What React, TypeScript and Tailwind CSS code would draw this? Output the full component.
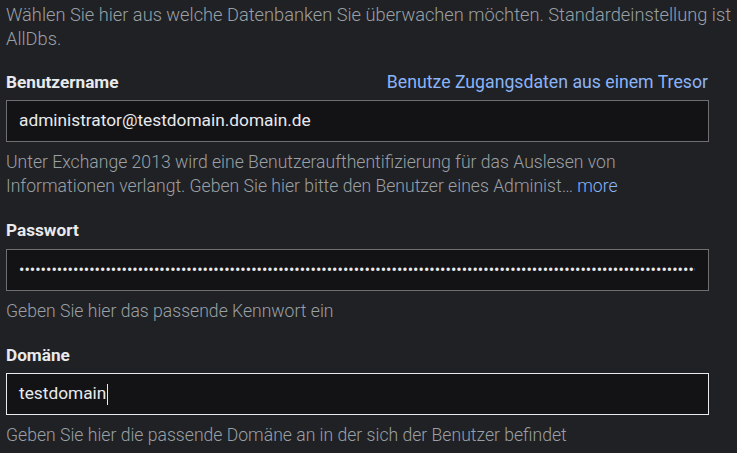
import React from "react";

const font = { fontFamily: "Roboto, 'Noto Sans', sans-serif" };

function Label({ children }: { children: React.ReactNode }) {
  return <div className="text-[17.2px] font-bold leading-6 text-[#e8eaed]">{children}</div>;
}

function Help({ children }: { children: React.ReactNode }) {
  return (
    <p className="mt-2 whitespace-nowrap text-[17.6px] font-light leading-6 text-[#9aa0a6]">
      {children}
    </p>
  );
}

export default function App() {
  const pw = "x".repeat(140);

  return (
    <main
      className="min-h-screen w-[737px] h-[453px] overflow-hidden bg-[#202124] pl-[6px] pt-[3px]"
      style={font}
    >
      <p className="whitespace-nowrap text-[18.25px] font-light leading-6 text-[#9aa0a6]">
        Wählen Sie hier aus welche Datenbanken Sie überwachen möchten. Standardeinstellung ist
        <br />
        AllDbs.
      </p>

      <div className="mt-[19px] w-[703px]">
        <div className="flex h-6 items-center justify-between">
          <Label>Benutzername</Label>
          <a className="pr-[1px] text-[17.7px] leading-6 text-[#8ab4f8]">
            Benutze Zugangsdaten aus einem Tresor
          </a>
        </div>
        <div className="mt-[6px] flex h-[42px] items-center border border-[#6f6f72] bg-[#131315] px-3 text-[17.3px] text-[#e8eaed]">
          administrator@testdomain.domain.de
        </div>
        <Help>
          Unter Exchange 2013 wird eine Benutzeraufthentifizierung für das Auslesen von
          <br />
          Informationen verlangt. Geben Sie hier bitte den Benutzer eines Administ…{" "}
          <span className="text-[#8ab4f8]">more</span>
        </Help>
      </div>

      <div className="mt-5 w-[703px]">
        <Label>Passwort</Label>
        <div className="mt-[7px] flex h-[42px] items-center border border-[#6f6f72] bg-[#131315] pl-3 pr-[13px]">
          <input
            type="password"
            readOnly
            value={pw}
            className="w-full bg-transparent text-[16px] text-[#e8eaed] outline-none"
            style={font}
          />
        </div>
        <Help>Geben Sie hier das passende Kennwort ein</Help>
      </div>

      <div className="mt-5 w-[703px]">
        <Label>Domäne</Label>
        <div className="mt-[6px] flex h-[42px] items-center border border-[#e8eaed] bg-[#131315] px-3 text-[17.3px] text-[#e8eaed]">
          testdomain
          <span className="ml-[1px] inline-block h-[21px] w-px bg-[#e8eaed]" />
        </div>
        <Help>Geben Sie hier die passende Domäne an in der sich der Benutzer befindet</Help>
      </div>
    </main>
  );
}
